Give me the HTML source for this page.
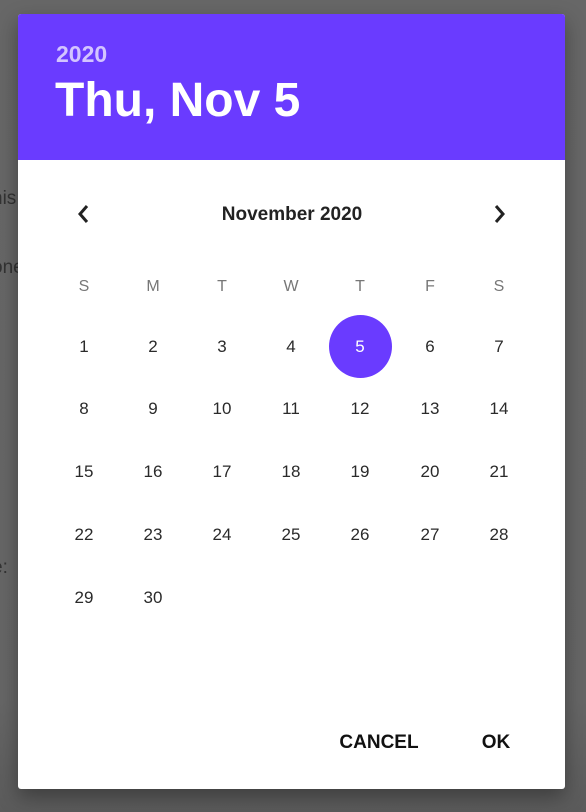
<!DOCTYPE html>
<html><head><style>
body{margin:0;width:586px;height:812px;background:linear-gradient(#676767 0,#666 700px,#5b5b5b 812px);font-family:"Liberation Sans",sans-serif;position:relative;overflow:hidden}
.bg{position:absolute;left:-8px;font-size:19px;color:#333}
.dlg{position:absolute;left:18px;top:14px;width:547px;height:775px;background:#fff;border-radius:3px;overflow:hidden;box-shadow:0 8px 20px rgba(0,0,0,.35)}
.hdr{position:absolute;left:0;top:0;width:547px;height:146px;background:#6a3bff}
.yr{position:absolute;left:38px;top:27px;font-size:23px;color:#d3c4ff;font-weight:bold}
.dt{position:absolute;left:37px;top:59px;font-size:48px;color:#fff;font-weight:bold}
.t{position:absolute;transform:translate(-50%,-50%);white-space:nowrap}
.d{font-size:17px;color:#2a2a2a}
.w{font-size:16px;color:#777}
.circ{position:absolute;left:311px;top:301px;width:63px;height:63px;border-radius:50%;background:#6a3bff}
.btn{font-size:19px;font-weight:bold;color:#111}
</style></head><body>
<div class="bg" style="top:188px">his</div>
<div class="bg" style="top:257px">one</div>
<div class="bg" style="top:557px">e:</div>
<div class="dlg">
<div class="hdr"><div class="yr">2020</div><div class="dt">Thu, Nov 5</div></div>
<svg style="position:absolute;left:56px;top:188px" width="20" height="24"><path d="M13 4 L6 12 L13 20" stroke="#222" stroke-width="3" fill="none"/></svg>
<svg style="position:absolute;left:471px;top:188px" width="20" height="24"><path d="M7 4 L14 12 L7 20" stroke="#222" stroke-width="3" fill="none"/></svg>
<div class="t" style="left:274px;top:201px;font-size:19px;font-weight:bold;color:#222">November 2020</div>
<div class="circ"></div>
<div id="g"></div>
<div class="t btn" style="left:361px;top:729px">CANCEL</div>
<div class="t btn" style="left:478px;top:729px">OK</div>
</div>
<script>
var g=document.getElementById('g'),h='';
var xs=[66,135,204,273,342,412,481];
var wd=['S','M','T','W','T','F','S'];
for(var i=0;i<7;i++)h+='<div class="t w" style="left:'+xs[i]+'px;top:273px">'+wd[i]+'</div>';
var ys=[333,395,458,521,584];
for(var n=1;n<=30;n++){var idx=n-1,r=Math.floor(idx/7),c=idx%7;
h+='<div class="t d" style="left:'+xs[c]+'px;top:'+ys[r]+'px;'+(n==5?'color:#fff':'')+'">'+n+'</div>';}
g.innerHTML=h;
</script>
</body></html>
